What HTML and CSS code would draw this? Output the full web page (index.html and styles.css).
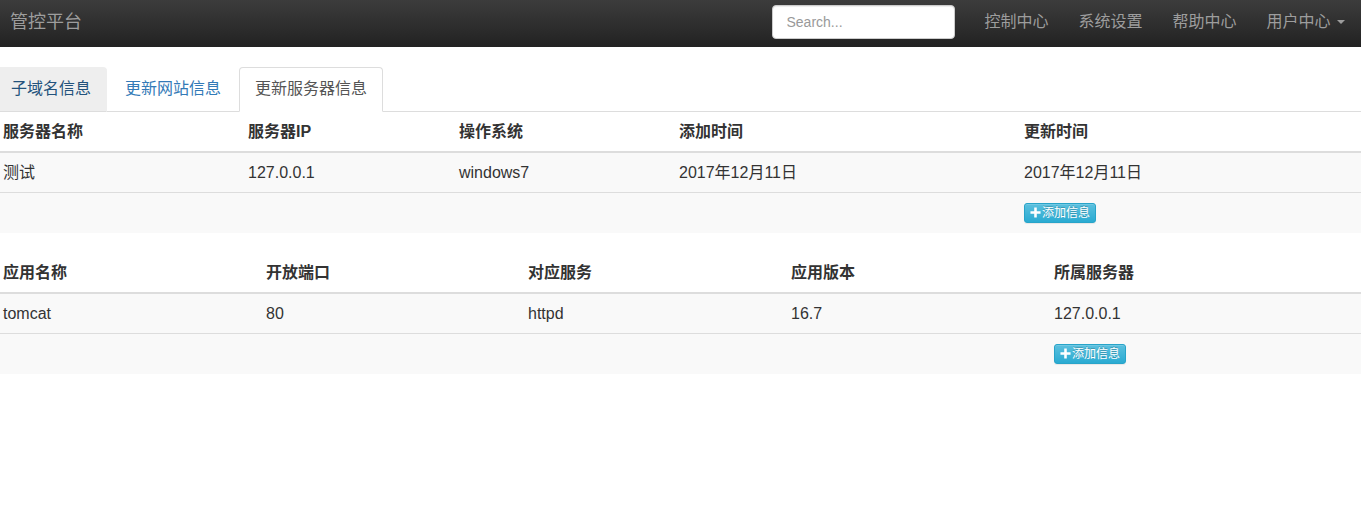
FILE: index.html
```html
<!DOCTYPE html>
<html lang="zh-CN">
<head>
<meta charset="utf-8">
<title>管控平台</title>
<link rel="stylesheet" href="styles.css">
</head>
<body>
<nav class="navbar">
  <a class="brand" href="#">管控平台</a>
  <form class="search-form">
    <input class="search" type="text" placeholder="Search...">
  </form>
  <ul class="nav-links">
    <li><a href="#">控制中心</a></li>
    <li><a href="#">系统设置</a></li>
    <li><a href="#">帮助中心</a></li>
    <li><a href="#">用户中心 <span class="caret"></span></a></li>
  </ul>
</nav>

<main class="content">
  <ul class="tabs">
    <li class="tab hover"><a href="#">子域名信息</a></li>
    <li class="tab"><a href="#">更新网站信息</a></li>
    <li class="tab active"><a href="#">更新服务器信息</a></li>
  </ul>

  <table class="grid">
    <colgroup>
      <col class="w245"><col class="w211"><col class="w220"><col class="w345"><col>
    </colgroup>
    <thead>
      <tr><th>服务器名称</th><th>服务器IP</th><th>操作系统</th><th>添加时间</th><th>更新时间</th></tr>
    </thead>
    <tbody>
      <tr><td>测试</td><td>127.0.0.1</td><td>windows7</td><td>2017年12月11日</td><td>2017年12月11日</td></tr>
      <tr class="actions"><td></td><td></td><td></td><td></td><td><button class="btn-add" type="button"><svg class="plus" viewBox="0 0 12 12" width="11" height="11"><path d="M4.6 0.5h2.8v4.1h4.1v2.8H7.4v4.1H4.6V7.4H0.5V4.6h4.1z" fill="#fff"/></svg>添加信息</button></td></tr>
    </tbody>
  </table>

  <table class="grid">
    <colgroup>
      <col class="w263"><col class="w262"><col class="w263"><col class="w263"><col>
    </colgroup>
    <thead>
      <tr><th>应用名称</th><th>开放端口</th><th>对应服务</th><th>应用版本</th><th>所属服务器</th></tr>
    </thead>
    <tbody>
      <tr><td>tomcat</td><td>80</td><td>httpd</td><td>16.7</td><td>127.0.0.1</td></tr>
      <tr class="actions"><td></td><td></td><td></td><td></td><td><button class="btn-add" type="button"><svg class="plus" viewBox="0 0 12 12" width="11" height="11"><path d="M4.6 0.5h2.8v4.1h4.1v2.8H7.4v4.1H4.6V7.4H0.5V4.6h4.1z" fill="#fff"/></svg>添加信息</button></td></tr>
    </tbody>
  </table>
</main>
</body>
</html>
```

FILE: styles.css
```css
html, body {
  margin: 0;
  padding: 0;
  overflow-x: hidden;
}

body {
  font-family: "Liberation Sans", "Noto Sans CJK SC", sans-serif;
  font-size: 16px;
  line-height: 1.42857;
  color: #333;
  background: #fff;
}

a {
  text-decoration: none;
}

/* navbar */
.navbar {
  display: flex;
  align-items: center;
  height: 47px;
  box-sizing: border-box;
  padding: 0 0 4px 10px;
  background: linear-gradient(to bottom, #3c3c3c 0, #222 100%);
}

.brand {
  font-size: 18px;
  color: #9d9d9d;
  line-height: 20px;
}

.search-form {
  margin: 0 15px 0 auto;
}

.search {
  display: block;
  box-sizing: border-box;
  width: 183px;
  height: 34px;
  padding: 6px 12px 6px 14px;
  font-family: "Liberation Sans", "Noto Sans CJK SC", sans-serif;
  font-size: 14px;
  color: #555;
  background: #fff;
  border: 1px solid #ccc;
  border-radius: 4px;
  box-shadow: inset 0 1px 1px rgba(0, 0, 0, .075);
}

.search::placeholder {
  color: #999;
}

.nav-links {
  display: flex;
  list-style: none;
  margin: 0 1px 0 0;
  padding: 0;
}

.nav-links a {
  display: block;
  padding: 0 15px;
  color: #9d9d9d;
  font-size: 16px;
  line-height: 20px;
}

.caret {
  display: inline-block;
  width: 0;
  height: 0;
  margin-left: 2px;
  vertical-align: middle;
  border-top: 4px solid #9d9d9d;
  border-left: 4px solid transparent;
  border-right: 4px solid transparent;
}

/* content */
.content {
  margin: 20px -5px 0 -5px;
}

.tabs {
  display: flex;
  list-style: none;
  margin: 0;
  padding: 0;
  border-bottom: 1px solid #ddd;
}

.tab {
  margin: 0 2px -1px 0;
}

.tab a {
  display: block;
  padding: 10px 15px;
  line-height: 1.42857;
  border: 1px solid transparent;
  border-radius: 4px 4px 0 0;
  color: #337ab7;
}

.tab.hover a {
  background: #eee;
  border-color: #eee #eee #ddd;
  color: #23527c;
}

.tab.active a {
  background: #fff;
  color: #555;
  border-color: #ddd #ddd transparent;
}

/* tables */
.grid {
  width: 100%;
  table-layout: fixed;
  border-collapse: collapse;
  border-spacing: 0;
  margin-bottom: 20px;
}

.w245 { width: 245px; }
.w211 { width: 211px; }
.w220 { width: 220px; }
.w345 { width: 345px; }
.w263 { width: 263px; }
.w262 { width: 262px; }

.grid th,
.grid td {
  padding: 8px;
  text-align: left;
  vertical-align: top;
  line-height: 23px;
}

.grid .actions td {
  line-height: 24px;
}

.grid th {
  font-weight: bold;
  border-bottom: 2px solid #ddd;
}

.grid td {
  border-top: 1px solid #ddd;
}

.grid tbody tr {
  background: #f9f9f9;
}

.btn-add {
  display: inline-flex;
  align-items: center;
  box-sizing: border-box;
  height: 20px;
  padding: 1px 5px;
  font-family: "Liberation Sans", "Noto Sans CJK SC", sans-serif;
  font-size: 12px;
  line-height: 1.5;
  color: #fff;
  text-shadow: 0 -1px 0 rgba(0, 0, 0, .2);
  background: linear-gradient(to bottom, #5bc0de 0, #2aabd2 100%);
  border: 1px solid #28a4c9;
  border-radius: 3px;
  box-shadow: inset 0 1px 0 rgba(255, 255, 255, .15), 0 1px 1px rgba(0, 0, 0, .075);
  cursor: pointer;
  vertical-align: top;
  margin-top: 2px;
}

.plus {
  display: block;
  margin-right: 1px;
}
```
